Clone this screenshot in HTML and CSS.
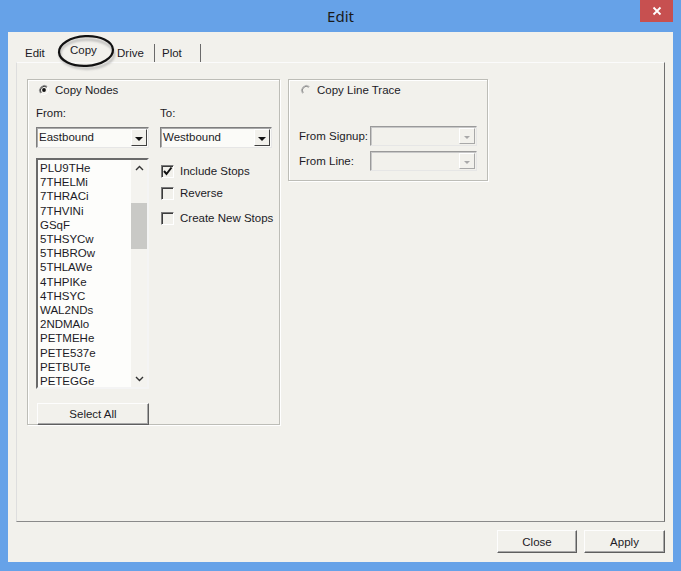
FILE: index.html
```html
<!DOCTYPE html>
<html lang="en">
<head>
  <meta charset="UTF-8">
  <title>Edit</title>
  <link rel="stylesheet" href="styles.css">
</head>
<body>

<div class="window">

  <!-- title bar -->
  <div class="titlebar">
    <span class="title">Edit</span>
    <div class="close-btn">
      <svg width="10" height="10" viewBox="0 0 10 10"><path d="M1.5 1.5 L8.5 8.5 M8.5 1.5 L1.5 8.5" stroke="#fff" stroke-width="1.8"/></svg>
    </div>
  </div>

  <div class="client">

    <div class="tabs">
      <span class="tab tab-edit">Edit</span>
      <span class="tab tab-copy">Copy</span>
      <span class="tab tab-drive">Drive</span>
      <span class="tab tab-plot">Plot</span>
    </div>

    <!-- hand drawn mark around the Copy tab -->
    <svg class="circle-mark" width="66" height="42" viewBox="0 0 66 42">
      <defs>
        <filter id="soft"><feGaussianBlur stdDeviation="1.2"/></filter>
      </defs>
      <ellipse cx="31" cy="21" rx="27" ry="14.5" fill="none" stroke="#9a9a9a" stroke-width="2.5" opacity="0.6" filter="url(#soft)"/>
      <ellipse cx="30" cy="18" rx="27" ry="14.8" fill="none" stroke="#111" stroke-width="2.2" transform="rotate(-3 30 18)"/>
    </svg>

    <div class="tab-panel">

      <!-- Copy Nodes -->
      <div class="group group-nodes">
        <div class="radio-row">
          <svg class="radio" width="12" height="12" viewBox="0 0 12 12">
            <path d="M9.5 2.5 A5 5 0 0 0 2.5 9.5" fill="none" stroke="#8a8a8a"/>
            <path d="M8.8 3.2 A4 4 0 0 0 3.2 8.8" fill="none" stroke="#3a3a3a"/>
            <path d="M9.5 2.5 A5 5 0 0 1 2.5 9.5" fill="none" stroke="#fff"/>
            <circle cx="6" cy="6" r="1.9" fill="#111"/>
          </svg>
          <span>Copy Nodes</span>
        </div>

        <div class="node-fields">
          <div class="col">
            <div class="field-label">From:</div>
            <div class="combo">
              <span class="combo-text">Eastbound</span>
              <span class="combo-btn"><span class="arrow"></span></span>
            </div>
            <div class="listbox">
              <div class="list-items">
                <div>PLU9THe</div>
                <div>7THELMi</div>
                <div>7THRACi</div>
                <div>7THVINi</div>
                <div>GSqF</div>
                <div>5THSYCw</div>
                <div>5THBROw</div>
                <div>5THLAWe</div>
                <div>4THPIKe</div>
                <div>4THSYC</div>
                <div>WAL2NDs</div>
                <div>2NDMAlo</div>
                <div>PETMEHe</div>
                <div>PETE537e</div>
                <div>PETBUTe</div>
                <div>PETEGGe</div>
              </div>
              <div class="scrollbar">
                <div class="sb-btn">
                  <svg width="9" height="6" viewBox="0 0 9 6"><path d="M1 5 L4.5 1.5 L8 5" fill="none" stroke="#333" stroke-width="1.4"/></svg>
                </div>
                <div class="sb-track"><div class="sb-thumb"></div></div>
                <div class="sb-btn">
                  <svg width="9" height="6" viewBox="0 0 9 6"><path d="M1 1 L4.5 4.5 L8 1" fill="none" stroke="#333" stroke-width="1.4"/></svg>
                </div>
              </div>
            </div>
            <button class="btn btn-select">Select All</button>
          </div>

          <div class="col">
            <div class="field-label">To:</div>
            <div class="combo">
              <span class="combo-text">Westbound</span>
              <span class="combo-btn"><span class="arrow"></span></span>
            </div>
            <label class="check-row check-first">
              <span class="checkbox">
                <svg width="11" height="11" viewBox="0 0 11 11"><path d="M2 5 L4.5 8 L9.5 1.5" fill="none" stroke="#111" stroke-width="2"/></svg>
              </span>
              Include Stops
            </label>
            <label class="check-row">
              <span class="checkbox"></span>
              Reverse
            </label>
            <label class="check-row check-last">
              <span class="checkbox"></span>
              Create New Stops
            </label>
          </div>
        </div>
      </div>

      <!-- Copy Line Trace -->
      <div class="group group-trace">
        <div class="radio-row">
          <svg class="radio" width="12" height="12" viewBox="0 0 12 12">
            <path d="M9.5 2.5 A5 5 0 0 0 2.5 9.5" fill="none" stroke="#b4b4b4"/>
            <path d="M8.8 3.2 A4 4 0 0 0 3.2 8.8" fill="none" stroke="#8a8a8a"/>
          </svg>
          <span>Copy Line Trace</span>
        </div>
        <div class="trace-row trace-first">
          <span class="trace-label">From Signup:</span>
          <div class="combo combo-disabled">
            <span class="combo-text"></span>
            <span class="combo-btn"><span class="arrow"></span></span>
          </div>
        </div>
        <div class="trace-row">
          <span class="trace-label">From Line:</span>
          <div class="combo combo-disabled">
            <span class="combo-text"></span>
            <span class="combo-btn"><span class="arrow"></span></span>
          </div>
        </div>
      </div>

    </div>

    <div class="dialog-buttons">
      <button class="btn btn-close">Close</button>
      <button class="btn btn-apply">Apply</button>
    </div>

  </div>
</div>

</body>
</html>
```

FILE: styles.css
```css
* { box-sizing: border-box; }
body {
  margin: 0;
  font-family: "Liberation Sans", Arial, sans-serif;
  font-size: 11.5px;
  color: #1c1b26;
  background-color: #66a2e8;
  white-space: nowrap;
}
.window {
  width: 681px;
  height: 571px;
  display: flex;
  flex-direction: column;
  background-color: #66a2e8;
}

/* title bar */
.titlebar {
  height: 32px;
  display: grid;
  grid-template-columns: 1fr auto 1fr;
}
.title {
  grid-column: 2;
  align-self: center;
  margin-top: -1px;
  font-family: "Noto Sans", "Open Sans", sans-serif;
  font-size: 15px;
  color: #1a1a1a;
}
.close-btn {
  grid-column: 3;
  justify-self: end;
  align-self: start;
  width: 33px;
  height: 22px;
  margin-right: 8px;
  background-color: #c75050;
  display: flex;
  align-items: center;
  justify-content: center;
}

/* client area */
.client {
  flex: 1;
  margin: 0 8px 9px 8px;
  background-color: #f2f1ec;
  display: flex;
  flex-direction: column;
  position: relative;
}
.tabs {
  height: 30px;
  display: flex;
  align-items: flex-end;
  padding-left: 17px;
}
.tab {
  height: 18px;
  line-height: 18px;
}
.tab-edit { width: 45px; }
.tab-copy { width: 47px; line-height: 13px; }
.tab-drive {
  width: 38px;
  border-right: 1px solid #6a6a6a;
}
.tab-plot {
  width: 46px;
  padding-left: 7px;
  border-right: 1px solid #6a6a6a;
}
.circle-mark {
  position: absolute;
  left: 48px;
  top: 1px;
}

.tab-panel {
  height: 460px;
  margin: 0 8px;
  padding: 16px 10px;
  border: 1px solid;
  border-color: #fbfbfb #6f6f6f #8a8a8a #dedede;
  display: flex;
  align-items: flex-start;
  gap: 8px;
}

/* group boxes */
.group {
  border: 1px solid #bdbdb7;
  box-shadow: inset 1px 1px 0 #fff, 1px 1px 0 #fff;
}
.group-nodes {
  width: 253px;
  height: 346px;
}
.group-trace {
  width: 200px;
  height: 102px;
}
.radio-row {
  height: 20px;
  display: flex;
  align-items: center;
  gap: 5px;
  padding-left: 10px;
}
.group-trace .radio-row { padding-left: 11px; }

.node-fields {
  display: grid;
  grid-template-columns: 113px 112px;
  column-gap: 11px;
  margin-left: 8px;
}
.col {
  display: flex;
  flex-direction: column;
}
.field-label {
  height: 18px;
  line-height: 18px;
  margin-top: 4px;
  margin-bottom: 5px;
}

/* combo boxes */
.combo {
  height: 21px;
  display: flex;
  border: 1px solid;
  border-color: #7e7e7e #e6e6e6 #e6e6e6 #7e7e7e;
  box-shadow: inset 1px 1px 0 #a9a9a9;
  background-color: #fbfbf8;
}
.combo-text {
  flex: 1;
  line-height: 19px;
  padding-left: 2px;
}
.combo-btn {
  width: 16px;
  margin: 1px;
  border: 1px solid;
  border-color: #fff #404040 #404040 #fff;
  background-color: #f2f1ec;
  display: flex;
  align-items: center;
  justify-content: center;
}
.arrow {
  width: 0;
  height: 0;
  border-left: 4px solid transparent;
  border-right: 4px solid transparent;
  border-top: 4px solid #111;
  margin-top: 2px;
}
.combo-disabled {
  width: 107px;
  height: 20px;
  flex-shrink: 0;
  border-color: #9a9a9a #e6e6e6 #e6e6e6 #9a9a9a;
  box-shadow: inset 1px 1px 0 #c8c8c8;
  background-color: #f2f1ec;
}
.combo-disabled .combo-btn { border-color: #fff #a8a8a8 #a8a8a8 #fff; }
.combo-disabled .arrow {
  border-top-color: #a8a8a8;
  border-left-width: 3px;
  border-right-width: 3px;
  border-top-width: 3px;
}

/* list box */
.listbox {
  height: 231px;
  margin-top: 10px;
  display: flex;
  border: 2px solid;
  border-color: #6a6a6a #f4f4f4 #f4f4f4 #6a6a6a;
  background-color: #fdfdfb;
}
.list-items {
  flex: 1;
  padding: 1px 0 0 2px;
  line-height: 14.2px;
  overflow: hidden;
}
.scrollbar {
  width: 16px;
  display: flex;
  flex-direction: column;
  background-color: #f4f3ef;
}
.sb-btn {
  height: 16px;
  display: flex;
  align-items: center;
  justify-content: center;
}
.sb-track { flex: 1; }
.sb-thumb {
  height: 46px;
  margin-top: 27px;
  background-color: #c9c9c6;
}

.btn {
  font-family: "Liberation Sans", Arial, sans-serif;
  font-size: 11.5px;
  color: #1c1b26;
  background-color: #f2f1ec;
  border: 1px solid;
  border-color: #fdfdfd #5f5f5f #5f5f5f #fdfdfd;
  box-shadow: inset -1px -1px 0 #a8a8a8;
  padding: 0;
}
.btn-select {
  width: 112px;
  height: 22px;
  margin-top: 14px;
  margin-left: 1px;
}

/* check boxes */
.check-row {
  height: 18px;
  display: flex;
  align-items: center;
  gap: 6px;
  margin-top: 4px;
  margin-left: 1px;
}
.check-first { margin-top: 14px; }
.check-last { margin-top: 7px; }
.checkbox {
  width: 13px;
  height: 13px;
  flex-shrink: 0;
  border: 1px solid;
  border-color: #7a7a7a #fff #fff #7a7a7a;
  box-shadow: inset 1px 1px 0 #3c3c3c;
  display: flex;
  align-items: center;
  justify-content: center;
}

/* line trace rows */
.trace-row {
  display: flex;
  align-items: center;
  padding-left: 10px;
  margin-top: 5px;
}
.trace-first { margin-top: 26px; }
.trace-label { width: 71px; flex-shrink: 0; }

.dialog-buttons {
  display: flex;
  justify-content: flex-end;
  gap: 7px;
  margin: 8px 8px 0 0;
}
.btn-close { width: 80px; height: 23px; }
.btn-apply { width: 81px; height: 23px; }
```
